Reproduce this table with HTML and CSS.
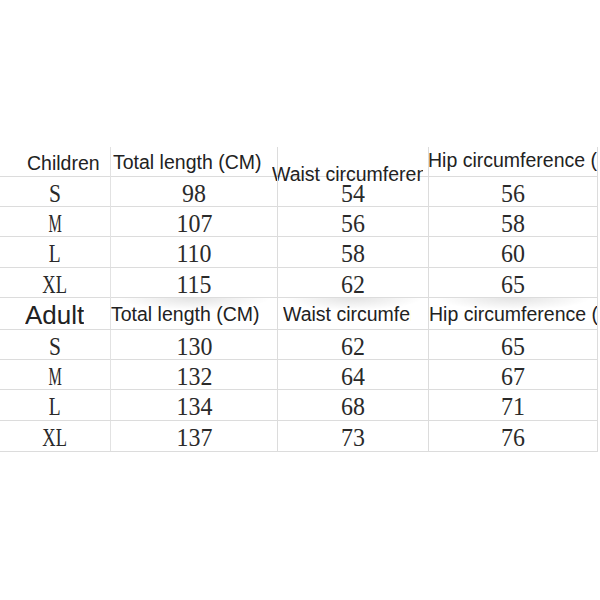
FILE: index.html
```html
<!DOCTYPE html>
<html>
<head>
<meta charset="utf-8">
<link rel="stylesheet" href="styles.css">
</head>
<body>
<div class="table">
  <div class="row head head-child">
    <div class="cell"><span class="h h-children">Children</span></div>
    <div class="cell"><span class="h h-total">Total length (CM)</span></div>
    <div class="cell"><span class="h h-waist1">Waist circumference (CM)</span></div>
    <div class="cell"><span class="h h-hip1">Hip circumference (CM)</span></div>
  </div>
  <div class="row r30"><div class="cell"><span class="sz sz-s">S</span></div><div class="cell"><span class="num">98</span></div><div class="cell"><span class="num">54</span></div><div class="cell"><span class="num">56</span></div></div>
  <div class="row r30"><div class="cell"><span class="sz sz-m">M</span></div><div class="cell"><span class="num">107</span></div><div class="cell"><span class="num">56</span></div><div class="cell"><span class="num">58</span></div></div>
  <div class="row r31"><div class="cell"><span class="sz sz-l">L</span></div><div class="cell"><span class="num">110</span></div><div class="cell"><span class="num">58</span></div><div class="cell"><span class="num">60</span></div></div>
  <div class="row r30"><div class="cell"><span class="sz sz-xl">XL</span></div><div class="cell"><span class="num">115</span></div><div class="cell"><span class="num">62</span></div><div class="cell"><span class="num">65</span></div></div>
  <div class="row head head-adult">
    <div class="cell"><span class="h h-adult">Adult</span></div>
    <div class="cell shade"><span class="h h-total2">Total length (CM)</span></div>
    <div class="cell shade"><span class="h h-waist2">Waist circumference (CM)</span></div>
    <div class="cell shade"><span class="h h-hip2">Hip circumference (CM)</span></div>
  </div>
  <div class="row r30"><div class="cell"><span class="sz sz-s">S</span></div><div class="cell"><span class="num">130</span></div><div class="cell"><span class="num">62</span></div><div class="cell"><span class="num">65</span></div></div>
  <div class="row r30"><div class="cell"><span class="sz sz-m">M</span></div><div class="cell"><span class="num">132</span></div><div class="cell"><span class="num">64</span></div><div class="cell"><span class="num">67</span></div></div>
  <div class="row r31"><div class="cell"><span class="sz sz-l">L</span></div><div class="cell"><span class="num">134</span></div><div class="cell"><span class="num">68</span></div><div class="cell"><span class="num">71</span></div></div>
  <div class="row r31"><div class="cell"><span class="sz sz-xl">XL</span></div><div class="cell"><span class="num">137</span></div><div class="cell"><span class="num">73</span></div><div class="cell"><span class="num">76</span></div></div>
</div>
</body>
</html>
```

FILE: styles.css
```css
html, body {
  margin: 0;
  padding: 0;
  background: #ffffff;
}

body {
  width: 600px;
  height: 600px;
  overflow: hidden;
  font-family: "Liberation Sans", Arial, sans-serif;
  color: #222;
}

.table {
  padding-top: 147px;
  width: 598px;
}

.row {
  display: grid;
  grid-template-columns: 111px 167px 151px 169px;
  border-bottom: 1px solid #dcdcdc;
  box-sizing: border-box;
}

.r30 { height: 30px; }
.r31 { height: 31px; }
.head-child { height: 30px; }
.head-adult { height: 32px; }

.cell {
  border-right: 1px solid #dcdcdc;
  display: flex;
  align-items: center;
  justify-content: center;
  min-width: 0;
}

.cell:first-child {
  border-right-color: #e2e2e2;
}

.head .cell {
  justify-content: flex-start;
  align-items: flex-start;
}

.h {
  display: block;
  white-space: nowrap;
  overflow: hidden;
  font-size: 19.5px;
  line-height: 22px;
  color: #222;
}

.h-children { margin: 5px 0 0 27px; }
.h-total { margin: 4px 0 0 2px; }
.h-waist1 { margin: 16px 0 0 -6px; width: 151px; }
.h-hip1 { margin: 2px 0 0 -1px; width: 169px; }

.h-adult {
  font-size: 26px;
  line-height: 28px;
  margin: 3px 0 0 25px;
}
.h-total2 { margin: 5px 0 0 0; }
.h-waist2 { margin: 5px 0 0 5px; width: 128px; }
.h-hip2 { margin: 5px 0 0 0; width: 169px; }

.shade {
  background:
    radial-gradient(ellipse 46% 40% at 50% 0, rgba(0, 0, 0, 0.11), rgba(0, 0, 0, 0) 100%);
}

.num {
  font-family: "Liberation Serif", "Times New Roman", serif;
  font-size: 26px;
  line-height: 26px;
  color: #2a2a2a;
  display: inline-block;
  transform: scaleX(0.92);
  margin-top: 4px;
}

.sz {
  font-family: "Liberation Serif", "Times New Roman", serif;
  font-size: 25px;
  line-height: 26px;
  color: #2a2a2a;
  display: inline-block;
  margin-top: 4px;
}

.sz-s { transform: scaleX(0.86); }
.sz-m { transform: scaleX(0.6); }
.sz-l { transform: scaleX(0.78); }
.sz-xl { transform: scaleX(0.74); }
```
